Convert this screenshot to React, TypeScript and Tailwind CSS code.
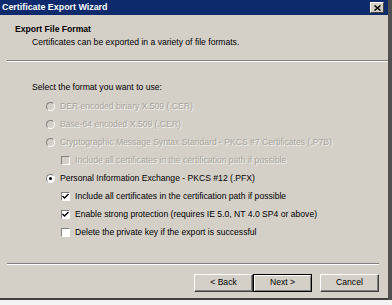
import { ReactNode } from 'react'

const font = { fontFamily: '"Liberation Sans", Arial, sans-serif' }

const disabledText = 'text-[#a8a59d] [text-shadow:1px_1px_0_#f2f1ee]'

function Radio({ checked, disabled, children }: { checked?: boolean; disabled?: boolean; children: ReactNode }) {
  return (
    <div className="flex h-[18px] items-center">
      <span
        className={
          'relative ml-[46px] mr-[5px] h-[9px] w-[9px] rounded-full border border-t-[#808080] border-l-[#808080] border-r-white border-b-white ' +
          (disabled ? 'bg-[#d4d0c8]' : 'bg-white')
        }
      >
        {checked && <span className="absolute left-[2px] top-[2px] h-[3px] w-[3px] rounded-full bg-black" />}
      </span>
      <span className={disabled ? disabledText : 'text-black'}>{children}</span>
    </div>
  )
}

function Check({ checked, disabled, children }: { checked?: boolean; disabled?: boolean; children: ReactNode }) {
  return (
    <div className="flex h-[18px] items-center">
      <span
        className={
          'ml-[61px] mr-[5px] flex h-[9px] w-[9px] items-center justify-center border border-t-[#808080] border-l-[#808080] border-r-white border-b-white ' +
          (disabled ? 'bg-[#d4d0c8]' : 'bg-white')
        }
      >
        {checked && (
          <svg width="7" height="7" viewBox="0 0 7 7">
            <path d="M0.5 3 L2.5 5 L6.5 1" stroke="#000" strokeWidth="1.4" fill="none" />
          </svg>
        )}
      </span>
      <span className={disabled ? disabledText : 'text-black'}>{children}</span>
    </div>
  )
}

function Button({ children, def }: { children: ReactNode; def?: boolean }) {
  return (
    <div
      className={
        'flex h-[18px] w-[59px] items-center justify-center bg-[#d4d0c8] ' +
        (def
          ? 'border border-black shadow-[inset_1px_1px_0_#fff,inset_-1px_-1px_0_#808080]'
          : 'border border-t-white border-l-white border-r-[#404040] border-b-[#404040] shadow-[inset_-1px_-1px_0_#808080]')
      }
    >
      {children}
    </div>
  )
}

export default function App() {
  return (
    <div className="h-[305px] w-[392px] overflow-hidden bg-[#f4f4f4] text-[8.6px] leading-none" style={font}>
      <div className="flex h-[300px] w-[392px]">
        <div className="flex h-[300px] w-[388px] flex-col bg-[#d4d0c8]">
          <div className="flex h-[15px] items-center bg-[#0c2a6c] pl-[2px] pr-[4px]">
            <span className="text-[8.9px] font-bold text-white">Certificate Export Wizard</span>
            <span className="ml-auto flex h-[11px] w-[14px] items-center justify-center border border-t-white border-l-white border-r-[#404040] border-b-[#404040] bg-[#d4d0c8]">
              <svg width="7" height="6" viewBox="0 0 7 6">
                <path d="M0.5 0.5 L6.5 5.5 M6.5 0.5 L0.5 5.5" stroke="#000" strokeWidth="1.5" />
              </svg>
            </span>
          </div>
          <div className="flex h-[45px] flex-col pl-[15px] pt-[10px]">
            <div className="font-bold">Export File Format</div>
            <div className="mt-[4px] pl-[17px]">Certificates can be exported in a variety of file formats.</div>
          </div>
          <div className="ml-[7px] h-[2px] border-t border-t-[#808080] border-b border-b-white" />
          <div className="flex flex-col pt-[21px]">
            <div className="mb-[6px] pl-[32px]">Select the format you want to use:</div>
            <Radio disabled>DER encoded binary X.509 (.CER)</Radio>
            <Radio disabled>Base-64 encoded X.509 (.CER)</Radio>
            <Radio disabled>Cryptographic Message Syntax Standard - PKCS #7 Certificates (.P7B)</Radio>
            <Check disabled>Include all certificates in the certification path if possible</Check>
            <Radio checked>Personal Information Exchange - PKCS #12 (.PFX)</Radio>
            <Check checked>Include all certificates in the certification path if possible</Check>
            <Check checked>Enable strong protection (requires IE 5.0, NT 4.0 SP4 or above)</Check>
            <Check>Delete the private key if the export is successful</Check>
          </div>
          <div className="ml-[7px] mr-[9px] mt-[21px] h-[2px] border-t border-t-[#808080] border-b border-b-white" />
          <div className="flex pl-[194px] pt-[9px]">
            <Button>&lt; Back</Button>
            <Button def>Next &gt;</Button>
            <div className="ml-[8px]">
              <Button>Cancel</Button>
            </div>
          </div>
          <div className="mt-auto h-[2px] bg-[#404040]" />
        </div>
        <div className="h-[300px] w-[4px] bg-[#505050]" />
      </div>
    </div>
  )
}
